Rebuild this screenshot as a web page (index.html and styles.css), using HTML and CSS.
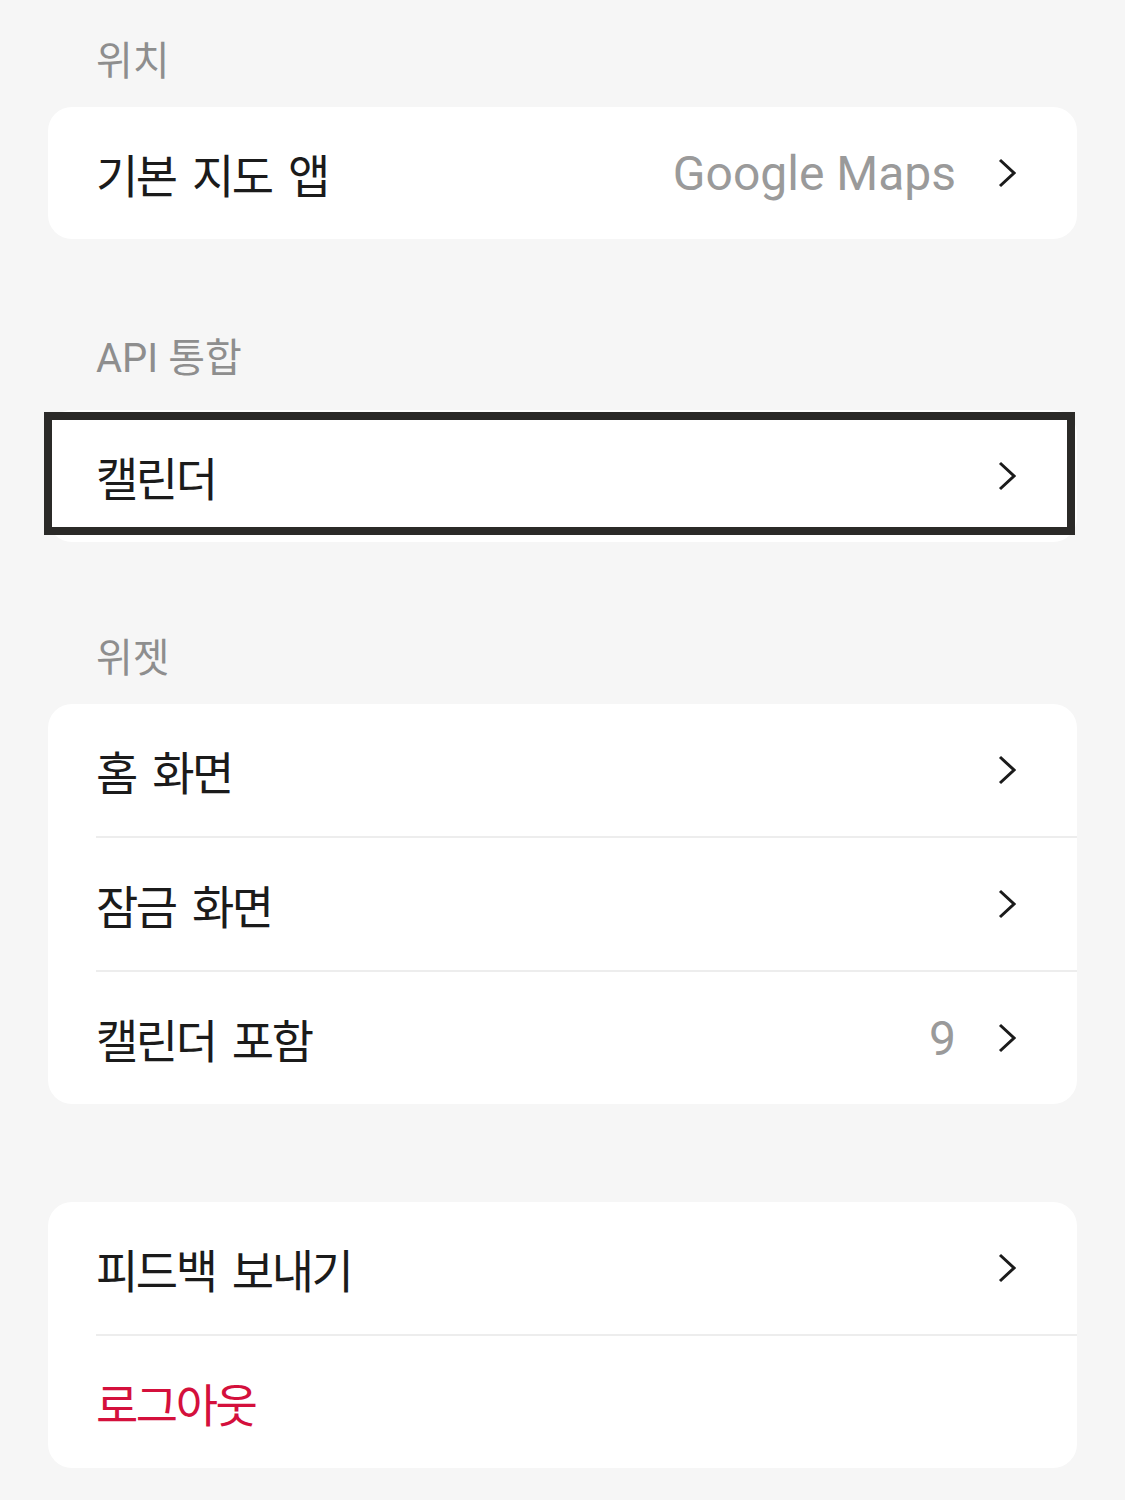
FILE: index.html
```html
<!DOCTYPE html>
<html lang="ko">
<head>
    <meta charset="UTF-8">
    <meta name="viewport" content="width=device-width, initial-scale=1.0">
    <title>설정</title>
    <link rel="stylesheet" href="styles.css">
</head>
<body>
    <div class="container">
        <div class="section">
            <h2 class="section-title">위치</h2>
            <div class="card">
                <div class="row">
                    <span class="label">기본 지도 앱</span>
                    <span class="value">Google Maps</span>
                    <svg class="chevron" viewBox="0 0 18 30"><polyline points="2,2 16,15 2,28"/></svg>
                </div>
            </div>
        </div>

        <div class="section">
            <h2 class="section-title">API 통합</h2>
            <div class="card card-focused">
                <div class="row">
                    <span class="label">캘린더</span>
                    <svg class="chevron" viewBox="0 0 18 30"><polyline points="2,2 16,15 2,28"/></svg>
                </div>
            </div>
        </div>

        <div class="section">
            <h2 class="section-title">위젯</h2>
            <div class="card">
                <div class="row">
                    <span class="label">홈 화면</span>
                    <svg class="chevron" viewBox="0 0 18 30"><polyline points="2,2 16,15 2,28"/></svg>
                </div>
                <div class="row">
                    <span class="label">잠금 화면</span>
                    <svg class="chevron" viewBox="0 0 18 30"><polyline points="2,2 16,15 2,28"/></svg>
                </div>
                <div class="row">
                    <span class="label">캘린더 포함</span>
                    <span class="value">9</span>
                    <svg class="chevron" viewBox="0 0 18 30"><polyline points="2,2 16,15 2,28"/></svg>
                </div>
            </div>
        </div>

        <div class="section section-last">
            <div class="card">
                <div class="row">
                    <span class="label">피드백 보내기</span>
                    <svg class="chevron" viewBox="0 0 18 30"><polyline points="2,2 16,15 2,28"/></svg>
                </div>
                <div class="row">
                    <span class="label label-danger">로그아웃</span>
                </div>
            </div>
        </div>
    </div>
</body>
</html>
```

FILE: styles.css
```css
* {
    margin: 0;
    padding: 0;
    box-sizing: border-box;
}
body {
    font-family: Roboto, "Noto Sans CJK KR", sans-serif;
    background-color: #f6f6f6;
    color: #1b1b1b;
}
.container {
    padding: 38px 48px 30px;
}
.section {
    margin-top: 96px;
}
.section:first-child {
    margin-top: 0;
}
.section-last {
    margin-top: 98px;
}
.section-title {
    font-size: 40px;
    font-weight: 400;
    line-height: 48px;
    color: #8e8e8e;
    padding-left: 48px;
    margin-bottom: 21px;
}
.card {
    position: relative;
    background-color: #fff;
    border-radius: 24px;
}
.card-focused {
    margin-top: 27px;
    margin-bottom: -3px;
}
.card-focused::after {
    content: "";
    position: absolute;
    top: 2px;
    bottom: 7px;
    left: -4px;
    right: 2px;
    border: 8px solid #2b2a28;
}
.row {
    position: relative;
    display: flex;
    align-items: center;
    height: 132px;
    padding: 0 61px 0 48px;
}
.row + .row {
    height: 134px;
    border-top: 2px solid transparent;
}
.row + .row::before {
    content: "";
    position: absolute;
    top: -2px;
    left: 48px;
    right: 0;
    height: 2px;
    background-color: #ededed;
}
.label {
    flex: 1;
    font-family: "Noto Sans CJK KR", sans-serif;
    font-size: 46px;
    letter-spacing: -2.5px;
    word-spacing: 6px;
}
.label-danger {
    color: #d4103c;
}
.value {
    font-size: 48px;
    color: #9a9a9a;
    margin-right: 42px;
}
.chevron {
    width: 18px;
    height: 30px;
    fill: none;
    stroke: #1b1b1b;
    stroke-width: 3;
}
```
